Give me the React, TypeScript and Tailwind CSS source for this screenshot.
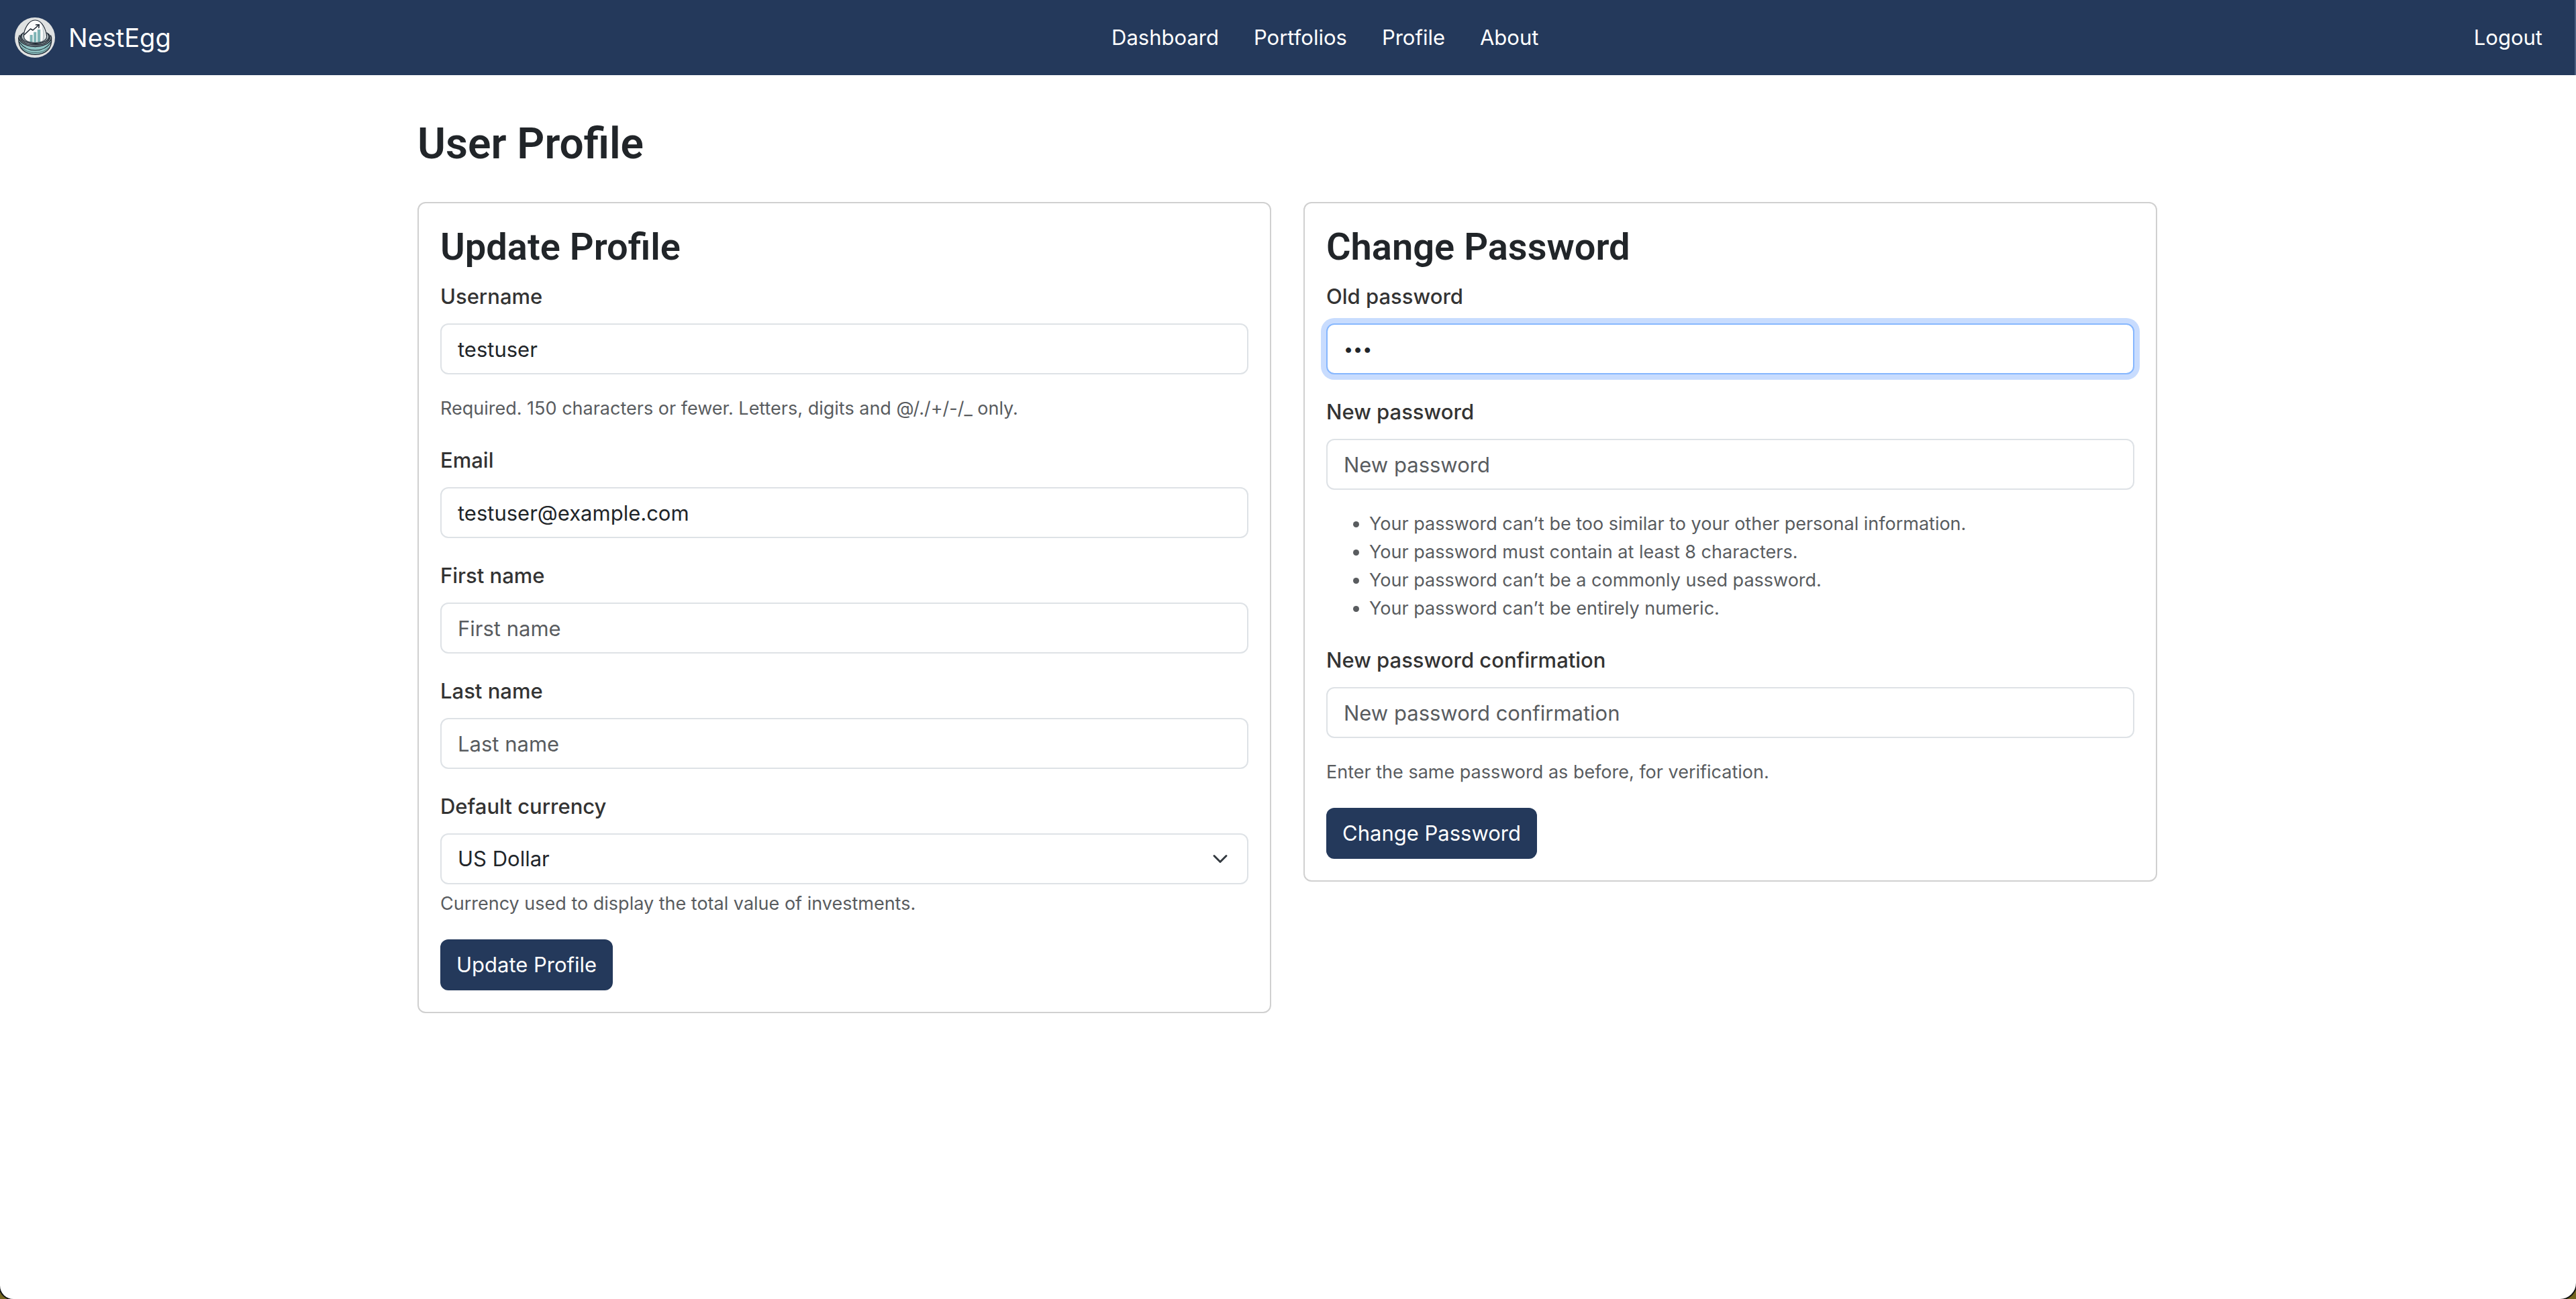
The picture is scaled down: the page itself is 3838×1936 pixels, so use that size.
import React from 'react';

function Logo() {
  return (
    <svg viewBox="0 0 60 60" className="size-[60px] shrink-0" aria-hidden="true">
      <circle cx="30" cy="30" r="30" fill="#dfe1e1" />
      <path d="M6 27 C5 46 15 55 30.5 55 C46 55 56 46 54.500 27 L47 22 L14 22 Z" fill="#a9b4b8" />
      <path d="M6 33 C7 48 17 55 30.500 55 C44 55 53 48 54.500 33 C47 42 40 44 30.500 44 C21 44 13 42 6 33 Z" fill="#8fc3c3" />
      <path d="M30.300 4 C20 4 13 19 13.500 29 C14 34 20 38.500 30.500 38.500 C41 38.500 47 34 47.500 29 C47 19 41 4 30.300 4 Z" fill="#fafafa" stroke="#1c2530" strokeWidth="1.200" />
      <path d="M40 10 C44 17 46 25 44 33 L41 36 C43 27 42 17 40 10 Z" fill="#c5ced0" />
      <g fill="#7eb4b5">
        <rect x="22.600" y="26" width="4" height="11" />
        <rect x="28.200" y="21.800" width="4" height="15.500" />
        <rect x="33.800" y="18" width="4.400" height="19" />
      </g>
      <g fill="none" stroke="#1c2530" strokeLinecap="round" strokeLinejoin="round">
        <path d="M14.500 25.500 L23.500 17 L27 19 L35.500 11.500" strokeWidth="1.500" />
        <path d="M31.500 11 L36.300 10.700 L35.800 15.500" strokeWidth="1.500" />
        <path d="M12.500 23 C7 28 10 34 18 37 C26 39.800 36 39.800 43 37 C51 34 53.500 28 48 23" strokeWidth="1.300" />
        <path d="M10 25 C4.500 33 14 41 30.500 41 C47 41 56 33 50.500 24.500" strokeWidth="1.300" />
        <path d="M13.500 29.500 C15 35 22 37.500 30.500 37.500 C39 37.500 46 35 47.500 29" strokeWidth="1.100" stroke="#56636c" />
        <path d="M7 27 C4 33 11 43 30.500 43.500 C50 43 57 33 53.500 27" strokeWidth="1.400" />
        <path d="M5.800 31 C5 46 15 55.300 30.500 55.300 C46 55.300 56 46 54.500 31" strokeWidth="1.300" />
        <path d="M7 37 C14 47 23 49 30.500 49 C38 49 47 47 54 37" strokeWidth="1.200" />
        <path d="M10.500 45 C18 52 24 52.500 31 52.500 C38 52.500 45 51 50 45" strokeWidth="0.900" stroke="#3f6266" />
      </g>
    </svg>
  );
}

function NavLink({ children }: { children: React.ReactNode }) {
  return (
    <a href="#" className="px-4 py-2 text-[31px] leading-[48px] text-white">
      {children}
    </a>
  );
}

function Header() {
  return (
    <header className="flex h-28 items-center border-r-2 border-[#4c5f80] bg-[#24395b] pl-[22px] pr-8">
      <a href="#" className="mr-6 flex items-center gap-5 text-[38px] leading-[60px] text-white">
        <Logo />
        NestEgg
      </a>
      <nav className="mx-auto flex gap-5" aria-label="Main">
        <NavLink>Dashboard</NavLink>
        <NavLink>Portfolios</NavLink>
        <NavLink>Profile</NavLink>
        <NavLink>About</NavLink>
      </nav>
      <NavLink>Logout</NavLink>
    </header>
  );
}

const control =
  'block h-[76px] w-full rounded-xl border-2 bg-white px-6 leading-[48px] text-[#212529] outline-none placeholder:text-[#595c5f] placeholder:opacity-100';

type FieldProps = {
  id: string;
  label: string;
  type?: string;
  value?: string;
  active?: boolean;
  help?: React.ReactNode;
};

function FieldLabel({ id, children }: { id: string; children: React.ReactNode }) {
  return (
    <label htmlFor={id} className="mb-4 block text-[31px] font-medium leading-[48px] text-[#333333]">
      {children}
    </label>
  );
}

function Field({ id, label, type = 'text', value, active, help }: FieldProps) {
  return (
    <div className="mb-8">
      <FieldLabel id={id}>{label}</FieldLabel>
      <input
        id={id}
        type={type}
        defaultValue={value}
        placeholder={label}
        className={
          active
            ? `${control} border-[#86b7fe] text-[25px] ring-8 ring-[#c8dcfe]`
            : `${control} border-[#dee2e6] text-[31px]`
        }
      />
      {help && <div className="mt-[30px] text-[27px] leading-[42px] text-[#595c5f]">{help}</div>}
    </div>
  );
}

function CurrencyField() {
  return (
    <div className="mb-8">
      <FieldLabel id="currency">Default currency</FieldLabel>
      <div className="relative">
        <select id="currency" className={`${control} appearance-none border-[#dee2e6] text-[31px]`}>
          <option>US Dollar</option>
        </select>
        <svg
          viewBox="0 0 16 16"
          className="pointer-events-none absolute inset-y-0 right-[30px] my-auto size-6"
          fill="none"
          stroke="#343a40"
          strokeWidth="2"
          strokeLinecap="round"
          strokeLinejoin="round"
          aria-hidden="true"
        >
          <path d="m2 5 6 6 6-6" />
        </svg>
      </div>
      <div className="mt-2 text-[27px] leading-[42px] text-[#595c5f]">
        Currency used to display the total value of investments.
      </div>
    </div>
  );
}

function Card({ title, action, children }: { title: string; action: string; children: React.ReactNode }) {
  return (
    <section className="rounded-xl border-2 border-[#d0d0d0] bg-white p-8">
      <h2 className="mb-4 font-[Roboto] text-[56px] font-semibold leading-[67px]">{title}</h2>
      <form>
        {children}
        <button type="button" className="block h-[76px] rounded-xl bg-[#24395b] px-6 text-[31px] leading-[48px] text-white">
          {action}
        </button>
      </form>
    </section>
  );
}

const passwordRules = [
  'Your password can’t be too similar to your other personal information.',
  'Your password must contain at least 8 characters.',
  'Your password can’t be a commonly used password.',
  'Your password can’t be entirely numeric.',
];

export default function App() {
  return (
    <div className="flex min-h-screen flex-col overflow-hidden bg-[#75651f] font-['Inter',sans-serif] text-[#212529]">
      <div className="grow rounded-bl-[20px] rounded-br-3xl bg-white shadow-[0_0_0_2px_#111111]">
        <Header />
        <div className="pr-0.5">
          <main className="mx-auto max-w-[2640px] px-6 pt-16">
            <h1 className="mb-12 font-[Roboto] text-[64px] font-semibold leading-[77px]">User Profile</h1>
            <div className="grid grid-cols-2 items-start gap-12">
              <Card title="Update Profile" action="Update Profile">
                <Field
                  id="username"
                  label="Username"
                  value="testuser"
                  help="Required. 150 characters or fewer. Letters, digits and @/./+/-/_ only."
                />
                <Field id="email" label="Email" type="email" value="testuser@example.com" />
                <Field id="first-name" label="First name" />
                <Field id="last-name" label="Last name" />
                <CurrencyField />
              </Card>
              <Card title="Change Password" action="Change Password">
                <Field id="old-password" label="Old password" type="password" value="abc" active />
                <Field
                  id="new-password"
                  label="New password"
                  type="password"
                  help={
                    <ul className="list-disc pl-16">
                      {passwordRules.map((rule) => (
                        <li key={rule}>{rule}</li>
                      ))}
                    </ul>
                  }
                />
                <Field
                  id="confirm-password"
                  label="New password confirmation"
                  type="password"
                  help="Enter the same password as before, for verification."
                />
              </Card>
            </div>
          </main>
        </div>
      </div>
    </div>
  );
}
